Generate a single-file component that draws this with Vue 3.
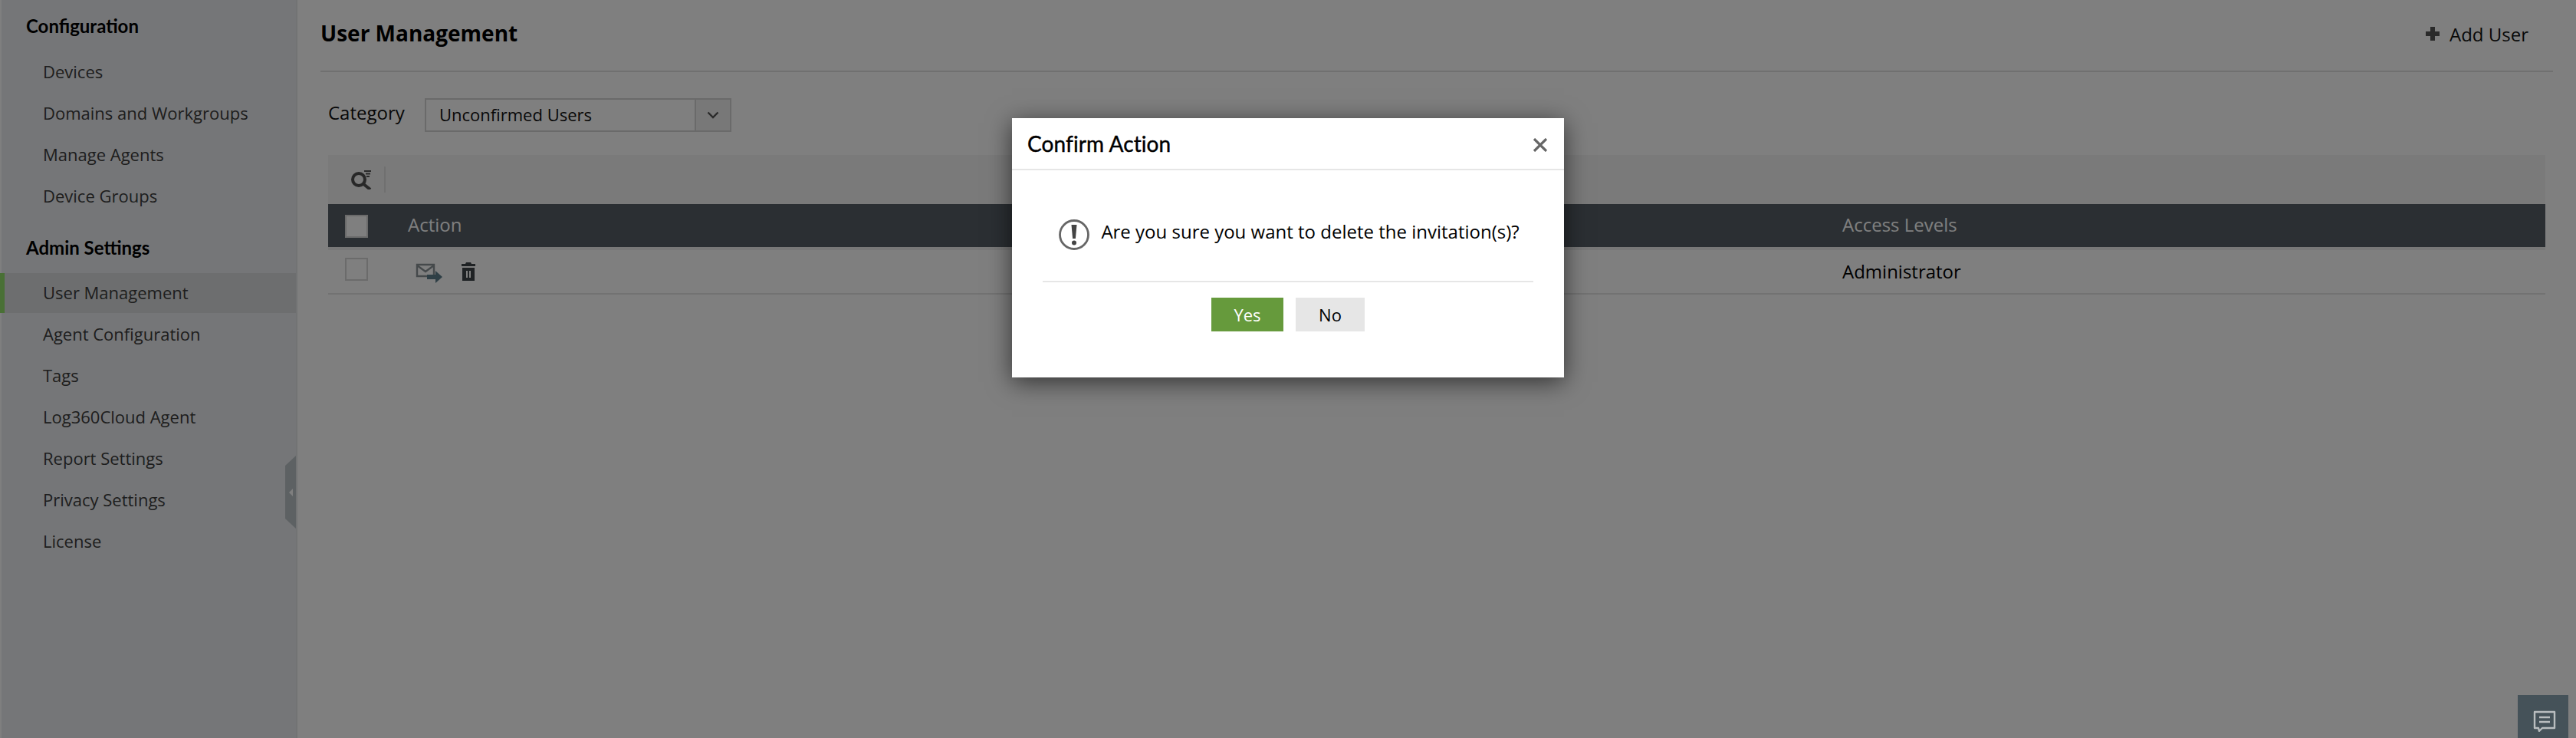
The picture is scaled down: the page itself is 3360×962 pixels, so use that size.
<script setup>
const configItems = ['Devices', 'Domains and Workgroups', 'Manage Agents', 'Device Groups']
const adminItems = ['User Management', 'Agent Configuration', 'Tags', 'Log360Cloud Agent', 'Report Settings', 'Privacy Settings', 'License']
</script>

<template>
  <div class="page">
    <aside class="sidebar">
      <h3 class="group first">Configuration</h3>
      <a v-for="i in configItems" :key="i" class="item">{{ i }}</a>
      <h3 class="group second">Admin Settings</h3>
      <a v-for="i in adminItems" :key="i" class="item" :class="{ active: i === 'User Management' }">{{ i }}</a>
      <div class="handle">
        <svg width="14" height="95" viewBox="0 0 14 95"><path d="M0 13 14 0V95L0 82Z" fill="#bac2c6"/><path d="M5 48 10 43V53Z" fill="#fff"/></svg>
      </div>
    </aside>
    <main class="main">
      <header class="top">
        <h1 class="title">User Management</h1>
        <a class="add">
          <svg width="18" height="18" viewBox="0 0 18 18"><path d="M6 0h6v6h6v6h-6v6H6v-6H0V6h6Z" fill="#555"/></svg>
          <span>Add User</span>
        </a>
      </header>
      <div class="filter">
        <label class="cat">Category</label>
        <div class="select">
          <span class="value">Unconfirmed Users</span>
          <span class="caret">
            <svg width="16" height="10" viewBox="0 0 16 10"><path d="M1.5 1.5 8 8l6.5-6.5" fill="none" stroke="#555" stroke-width="2.4"/></svg>
          </span>
        </div>
      </div>
      <div class="toolbar">
        <svg width="28" height="26" viewBox="0 0 28 26">
          <circle cx="11" cy="13" r="8" fill="none" stroke="#505050" stroke-width="4"/>
          <path d="M16 18l10 8" stroke="#505050" stroke-width="4"/>
          <path d="M18 2h9M20 5.5h6M21 9h4" stroke="#555" stroke-width="1.8"/>
        </svg>
        <span class="sep"></span>
      </div>
      <div class="thead">
        <span class="cell-check"><i class="check head"></i></span>
        <span class="cell-action">Action</span>
        <span class="cell-access">Access Levels</span>
      </div>
      <div class="trow">
        <span class="cell-check"><i class="check"></i></span>
        <span class="cell-action icons">
          <svg class="mail" width="36" height="26" viewBox="0 0 36 26">
            <path d="M2 2h22v15H2Z" fill="none" stroke="#8a9296" stroke-width="2.4"/>
            <path d="M2 3l11 8 11-8" fill="none" stroke="#8a9296" stroke-width="2.4"/>
            <path d="M15 15h11v-5l9 8-9 8v-5H15Z" fill="#5e7e8c"/>
          </svg>
          <svg width="18" height="24" viewBox="0 0 18 24">
            <path d="M6 0h6l1 2h5v3H0V2h5ZM1 7h16v17H1Z" fill="#3e4448"/>
            <path d="M6 11h2v9H6ZM10 11h2v9h-2Z" fill="#fff"/>
          </svg>
        </span>
        <span class="cell-access dark">Administrator</span>
      </div>
    </main>
    <div class="overlay">
      <section class="dialog">
        <header class="dlg-head">
          <h2>Confirm Action</h2>
          <svg class="close" width="20" height="18" viewBox="0 0 20 18"><path d="M2 1l16 16M18 1 2 17" stroke="#666" stroke-width="3.2"/></svg>
        </header>
        <div class="dlg-body">
          <svg class="warn" width="42" height="42" viewBox="0 0 42 42">
            <circle cx="21" cy="21" r="18.5" fill="none" stroke="#666" stroke-width="2.8"/>
            <path d="M17.5 8h7l-1.6 18h-3.8Z" fill="#444"/>
            <circle cx="21" cy="31.5" r="3" fill="#444"/>
          </svg>
          <p>Are you sure you want to delete the invitation(s)?</p>
        </div>
        <div class="dlg-actions">
          <button class="yes">Yes</button>
          <button class="no">No</button>
        </div>
      </section>
    </div>
    <div class="chat">
      <svg width="30" height="28" viewBox="0 0 30 28">
        <path d="M2 2h26v21H12l-4 4-1-4H2Z" fill="none" stroke="#b9bdbf" stroke-width="2.4" stroke-linejoin="round"/>
        <path d="M8 9h14M8 15h14" stroke="#b9bdbf" stroke-width="2.4"/>
      </svg>
    </div>
  </div>
</template>

<style scoped>
.page {
  position: relative;
  display: flex;
  width: 3360px;
  height: 962px;
  overflow: hidden;
  background: #fff;
  font-family: "Open Sans", sans-serif;
  color: #222;
}
.sidebar {
  position: relative;
  box-sizing: border-box;
  width: 388px;
  flex: none;
  background: #ebedf0;
  border-left: 2px solid #fff;
  border-right: 2px solid #e4e6e9;
  padding-top: 14px;
}
.group {
  margin: 0;
  padding-left: 32px;
  font: 700 24px/40px Lato, sans-serif;
  color: #000;
}
.first { margin-bottom: 12px; }
.second { margin-top: 21px; margin-bottom: 13px; }
.item {
  display: block;
  height: 54px;
  padding-left: 54px;
  font-size: 22px;
  line-height: 54px;
  color: #3c3c3c;
}
.item.active {
  box-sizing: border-box;
  height: 52px;
  line-height: 50px;
  margin-left: -2px;
  padding-left: 50px;
  background: #dadcdf;
  border-left: 6px solid #92e06a;
}
.handle {
  position: absolute;
  top: 594px;
  right: 0;
  height: 95px;
  line-height: 0;
}
.main {
  flex: 1;
  min-width: 0;
  padding: 0 30px;
}
.top {
  display: flex;
  align-items: center;
  justify-content: space-between;
  height: 92px;
  border-bottom: 2px solid #e0e0e0;
  padding-right: 32px;
}
.title {
  margin: 0;
  font-size: 28px;
  font-weight: 700;
  color: #000;
  position: relative;
  top: -3px;
}
.add {
  display: flex;
  align-items: center;
  gap: 13px;
  font-size: 24px;
  color: #111;
  position: relative;
  top: -2px;
}
.filter {
  display: flex;
  align-items: center;
  margin: 34px 0 30px 10px;
  height: 44px;
}
.cat { width: 126px; font-size: 24px; color: #111; position: relative; top: -4px; }
.select {
  box-sizing: border-box;
  display: flex;
  width: 400px;
  height: 44px;
  border: 2px solid #d4d4d4;
  background: #fff;
}
.value { flex: 1; padding-left: 17px; font-size: 22px; line-height: 39px; color: #111; }
.caret {
  width: 44px;
  display: flex;
  align-items: center;
  justify-content: center;
  background: #f0f0f0;
  border-left: 2px solid #d4d4d4;
}
.toolbar {
  display: flex;
  align-items: center;
  gap: 16px;
  height: 64px;
  margin: 0 10px;
  padding-left: 29px;
  background: #f4f4f4;
}
.sep { width: 2px; height: 34px; background: #e0e0e0; }
.thead, .trow {
  display: grid;
  grid-template-columns: 104px 1871px 1fr;
  align-items: center;
  margin: 0 10px;
  font-size: 24px;
}
.thead {
  height: 56px;
  background: #565f67;
  color: #fff;
  border-bottom: 4px solid #f0f0f0;
}
.trow {
  height: 56px;
  border-bottom: 2px solid #e4e4e4;
}
.cell-check { padding-left: 22px; line-height: 0; }
.check {
  display: block;
  box-sizing: border-box;
  width: 30px;
  height: 30px;
  border: 2px solid #d6d6d6;
  background: #fff;
  position: relative;
  top: -3px;
}
.thead .cell-action, .thead .cell-access { position: relative; top: -2px; }
.check.head { top: 1px; }
.icons { display: flex; align-items: center; gap: 24px; padding-left: 10px; }
.mail { position: relative; top: 2px; }
.dark { color: #000; position: relative; top: -1px; }
.chat {
  position: absolute;
  right: 10px;
  bottom: 0;
  width: 66px;
  height: 56px;
  background: #455259;
  display: flex;
  justify-content: center;
  padding: 20px 0 0 4px;
  box-sizing: border-box;
}
.overlay {
  position: absolute;
  inset: 0;
  background: rgba(0, 0, 0, 0.5);
  display: flex;
  justify-content: center;
  align-items: flex-start;
  padding-top: 154px;
  box-sizing: border-box;
}
.dialog {
  box-sizing: border-box;
  width: 720px;
  height: 338px;
  background: #fff;
  box-shadow: 0 6px 30px rgba(0, 0, 0, 0.6);
}
.dlg-head {
  box-sizing: border-box;
  display: flex;
  align-items: center;
  justify-content: space-between;
  height: 68px;
  padding: 0 21px 0 20px;
  border-bottom: 2px solid #e6e6e6;
}
.dlg-head h2 {
  margin: 0;
  font: 400 28px/1 Lato, sans-serif;
  letter-spacing: 0.1px;
  color: #000;
  -webkit-text-stroke: 0.4px #000;
}
.close { position: relative; top: 2px; }
.dlg-body {
  display: flex;
  align-items: center;
  justify-content: center;
  gap: 14px;
  margin: 0 40px;
  height: 146px;
  padding: 20px 0 0 2px;
  border-bottom: 2px solid #e6e6e6;
  box-sizing: border-box;
}
.warn { position: relative; top: 2px; }
.dlg-body p { margin: 0; font-size: 24px; color: #000; position: relative; top: -3px; }
.dlg-actions {
  display: flex;
  justify-content: center;
  gap: 16px;
  margin-top: 20px;
}
button { border: 0; font-family: inherit; font-size: 22px; height: 44px; padding: 0; line-height: 40px; }
.yes { width: 94px; background: #669a3c; color: #fff; }
.no { width: 90px; background: #e6e6e6; color: #000; }
</style>
